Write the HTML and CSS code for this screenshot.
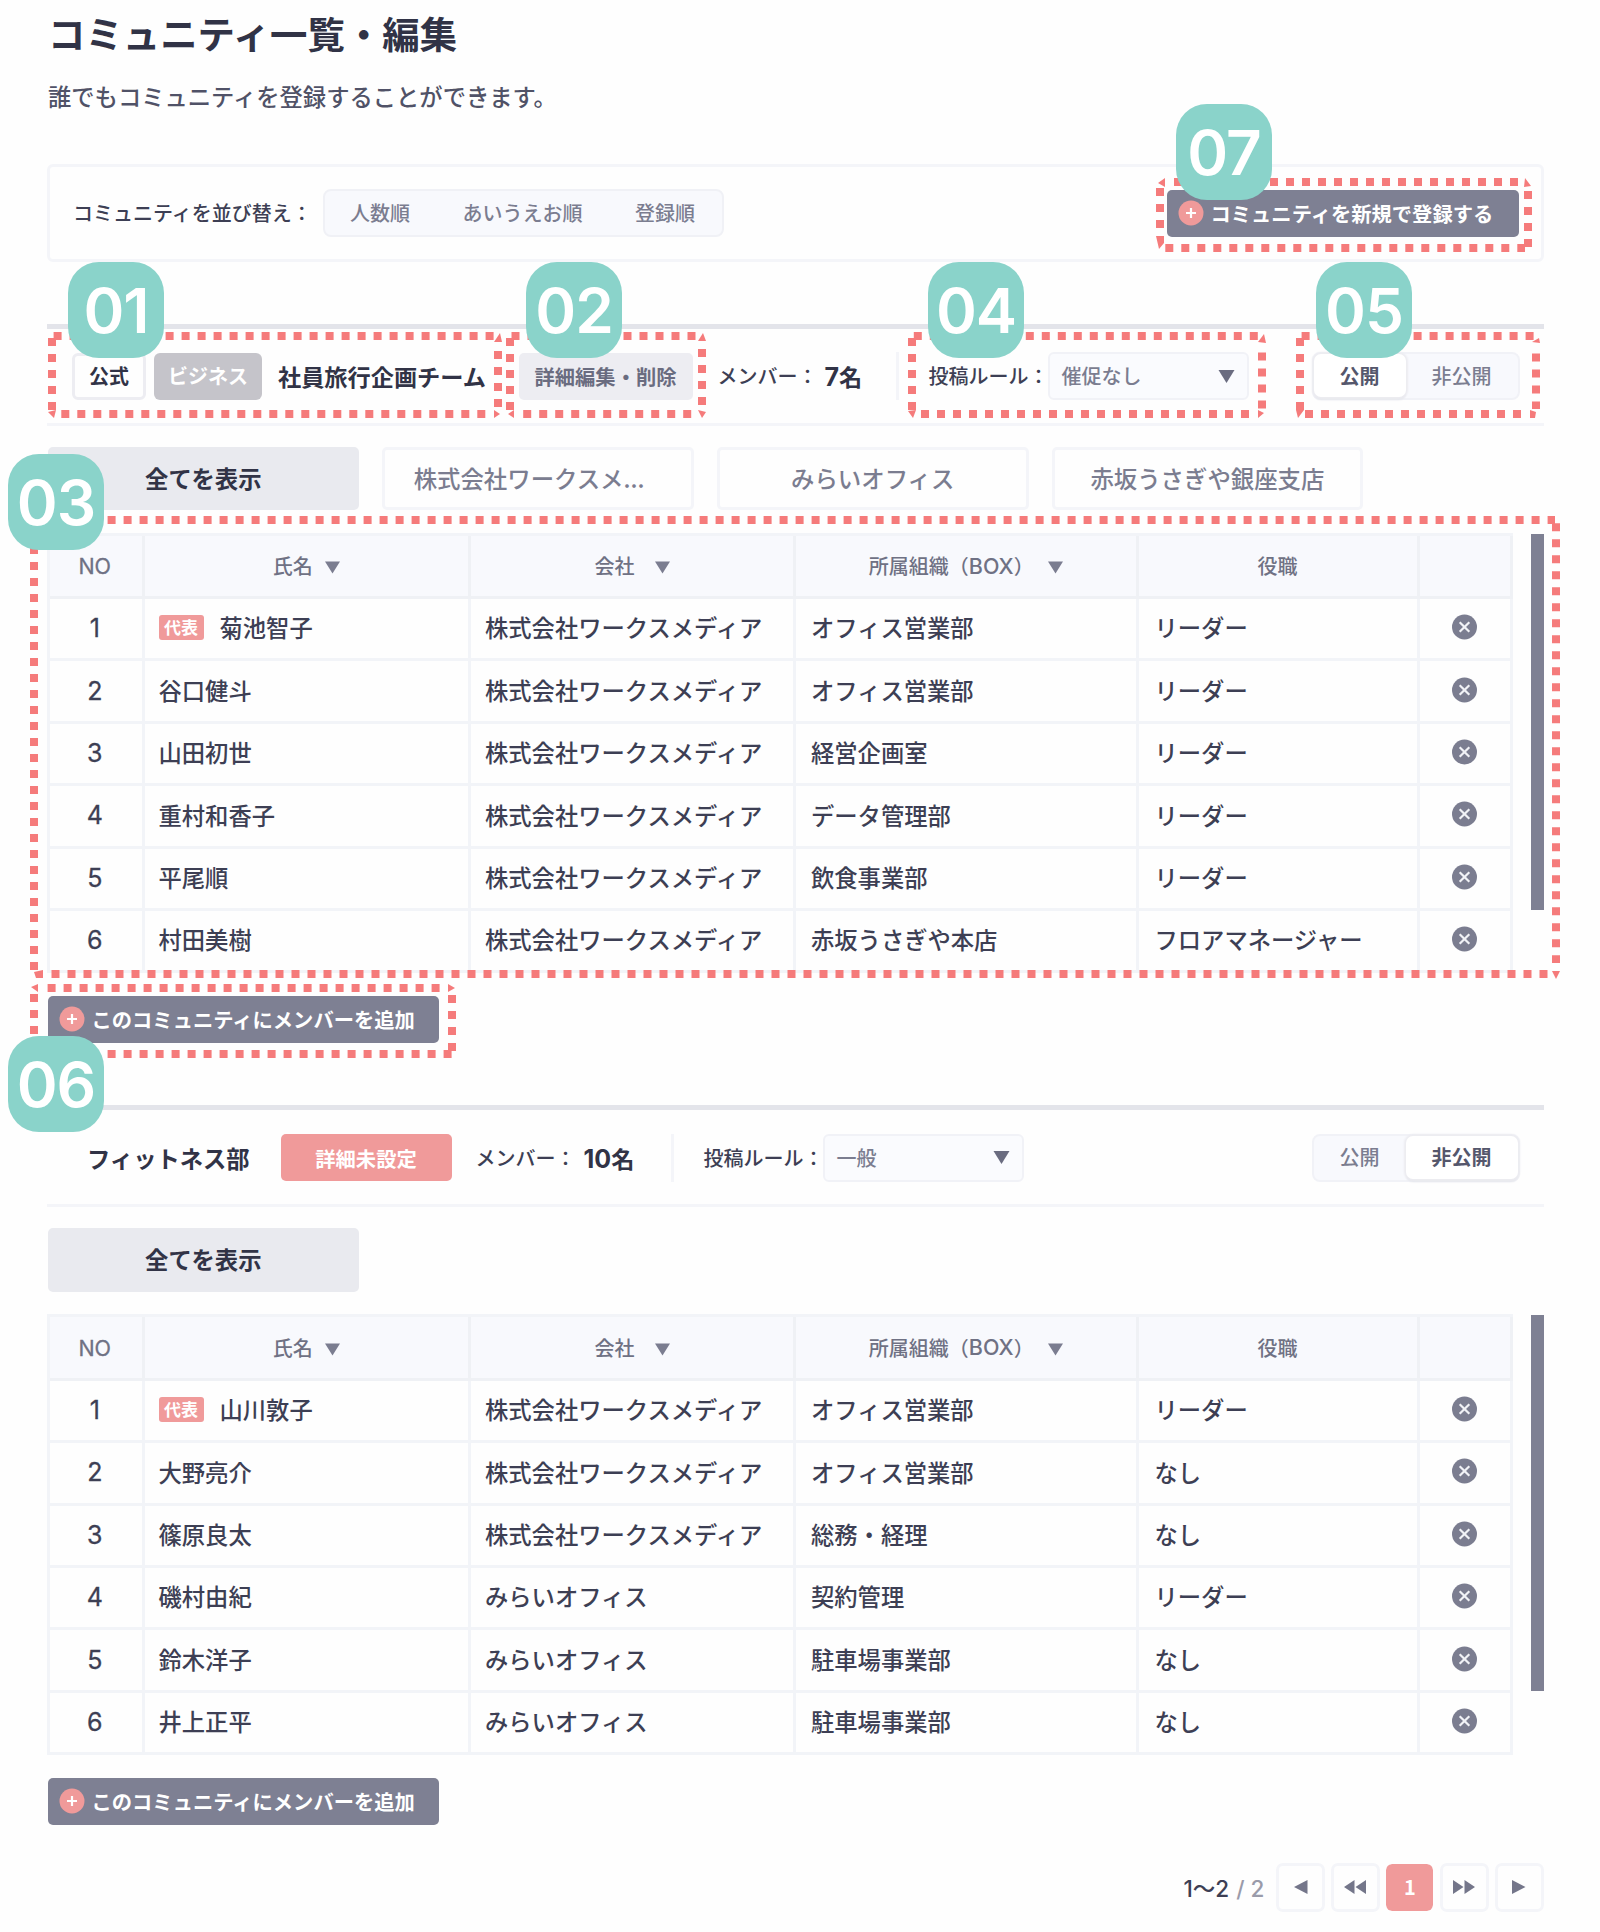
FILE: index.html
```html
<!DOCTYPE html>
<html lang="ja">
<head>
<meta charset="utf-8">
<title>コミュニティ一覧・編集</title>
<link rel="stylesheet" href="styles.css">
</head>
<body>
<svg class="defs" width="0" height="0" aria-hidden="true">
  <symbol id="down" viewBox="0 0 16 13"><path d="M0 0H16L8 13Z"/></symbol>
  <symbol id="plus" viewBox="0 0 26 26"><circle cx="13" cy="13" r="12.5" fill="#f09a9a"/><path d="M13 8V18M8 13H18" stroke="#fff" stroke-width="2.2"/></symbol>
  <symbol id="remove" viewBox="0 0 26 26"><circle cx="13" cy="13" r="13" fill="#7b7d90"/><path d="M8 8L18 18M18 8L8 18" stroke="#f1f2f6" stroke-width="2.3"/></symbol>
</svg>
<main class="page">
  <h1 class="title">コミュニティ一覧・編集</h1>
  <p class="lead">誰でもコミュニティを登録することができます。</p>

  <div class="filter">
    <span class="filter-label">コミュニティを並び替え：</span>
    <div class="sort"><span>人数順</span><span>あいうえお順</span><span>登録順</span></div>
    <button class="dark-btn create"><svg class="plus"><use href="#plus"/></svg>コミュニティを新規で登録する</button>
  </div>

  <section class="community">
    <header class="head">
      <span class="tag official">公式</span>
      <span class="tag business">ビジネス</span>
      <h2 class="name">社員旅行企画チーム</h2>
      <button class="edit">詳細編集・削除</button>
      <span class="members">メンバー：</span><b class="count"><span class="num">7</span>名</b>
      <span class="rule">投稿ルール：</span>
      <div class="select">催促なし<svg class="tri"><use href="#down"/></svg></div>
      <div class="toggle"><span class="opt open on">公開</span><span class="opt closed">非公開</span></div>
    </header>
    <nav class="tabs">
      <span class="tab current">全てを表示</span><span class="tab clipped">株式会社ワークスメ...</span><span class="tab">みらいオフィス</span><span class="tab">赤坂うさぎや銀座支店</span>
    </nav>
    <div class="list">
      <div class="table">
        <div class="row th"><span>NO</span><span>氏名<svg class="sorter near"><use href="#down"/></svg></span><span>会社<svg class="sorter"><use href="#down"/></svg></span><span>所属組織（<em class="latin">BOX</em>）<svg class="sorter box"><use href="#down"/></svg></span><span>役職</span><span></span></div>
        <div class="row"><span>1</span><span><i class="rep">代表</i>菊池智子</span><span>株式会社ワークスメディア</span><span>オフィス営業部</span><span>リーダー</span><span><svg class="x"><use href="#remove"/></svg></span></div>
        <div class="row"><span>2</span><span>谷口健斗</span><span>株式会社ワークスメディア</span><span>オフィス営業部</span><span>リーダー</span><span><svg class="x"><use href="#remove"/></svg></span></div>
        <div class="row"><span>3</span><span>山田初世</span><span>株式会社ワークスメディア</span><span>経営企画室</span><span>リーダー</span><span><svg class="x"><use href="#remove"/></svg></span></div>
        <div class="row"><span>4</span><span>重村和香子</span><span>株式会社ワークスメディア</span><span>データ管理部</span><span>リーダー</span><span><svg class="x"><use href="#remove"/></svg></span></div>
        <div class="row"><span>5</span><span>平尾順</span><span>株式会社ワークスメディア</span><span>飲食事業部</span><span>リーダー</span><span><svg class="x"><use href="#remove"/></svg></span></div>
        <div class="row"><span>6</span><span>村田美樹</span><span>株式会社ワークスメディア</span><span>赤坂うさぎや本店</span><span>フロアマネージャー</span><span><svg class="x"><use href="#remove"/></svg></span></div>
      </div>
      <div class="scrollbar"></div>
    </div>
    <button class="dark-btn add"><svg class="plus"><use href="#plus"/></svg>このコミュニティにメンバーを追加</button>
  </section>

  <section class="community">
    <header class="head plain">
      <h2 class="name">フィットネス部</h2>
      <button class="edit unset">詳細未設定</button>
      <span class="members">メンバー：</span><b class="count"><span class="num">10</span>名</b>
      <span class="rule">投稿ルール：</span>
      <div class="select">一般<svg class="tri"><use href="#down"/></svg></div>
      <div class="toggle"><span class="opt open">公開</span><span class="opt closed on">非公開</span></div>
    </header>
    <nav class="tabs"><span class="tab current">全てを表示</span></nav>
    <div class="list">
      <div class="table">
        <div class="row th"><span>NO</span><span>氏名<svg class="sorter near"><use href="#down"/></svg></span><span>会社<svg class="sorter"><use href="#down"/></svg></span><span>所属組織（<em class="latin">BOX</em>）<svg class="sorter box"><use href="#down"/></svg></span><span>役職</span><span></span></div>
        <div class="row"><span>1</span><span><i class="rep">代表</i>山川敦子</span><span>株式会社ワークスメディア</span><span>オフィス営業部</span><span>リーダー</span><span><svg class="x"><use href="#remove"/></svg></span></div>
        <div class="row"><span>2</span><span>大野亮介</span><span>株式会社ワークスメディア</span><span>オフィス営業部</span><span>なし</span><span><svg class="x"><use href="#remove"/></svg></span></div>
        <div class="row"><span>3</span><span>篠原良太</span><span>株式会社ワークスメディア</span><span>総務・経理</span><span>なし</span><span><svg class="x"><use href="#remove"/></svg></span></div>
        <div class="row"><span>4</span><span>磯村由紀</span><span>みらいオフィス</span><span>契約管理</span><span>リーダー</span><span><svg class="x"><use href="#remove"/></svg></span></div>
        <div class="row"><span>5</span><span>鈴木洋子</span><span>みらいオフィス</span><span>駐車場事業部</span><span>なし</span><span><svg class="x"><use href="#remove"/></svg></span></div>
        <div class="row"><span>6</span><span>井上正平</span><span>みらいオフィス</span><span>駐車場事業部</span><span>なし</span><span><svg class="x"><use href="#remove"/></svg></span></div>
      </div>
      <div class="scrollbar"></div>
    </div>
    <button class="dark-btn add"><svg class="plus"><use href="#plus"/></svg>このコミュニティにメンバーを追加</button>
  </section>

  <nav class="pager">
    <span class="range">1〜2 <span class="total">/ 2</span></span>
    <span class="pg"><svg width="24" height="16"><path d="M18.500 1V15L5 8Z"/></svg></span>
    <span class="pg"><svg width="24" height="16"><path d="M11.500 1V15L1 8ZM23 1V15L12.500 8Z"/></svg></span>
    <span class="pg now">1</span>
    <span class="pg"><svg width="24" height="16"><path d="M1 1V15L11.500 8ZM12.500 1V15L23 8Z"/></svg></span>
    <span class="pg"><svg width="24" height="16"><path d="M5 1V15L18.500 8Z"/></svg></span>
  </nav>

  <svg class="frames" viewBox="0 0 1600 1932" aria-hidden="true">
    <g class="dash">
      <path d="M53.600 336H494M61.300 414H486M52 338V410M498 351V407"/>
      <path d="M511.500 336H696M523.200 414H691.500M510 338V410M702 349V405"/>
      <path d="M43.600 520H1555M51.500 974H1547.500M34 546V971M1556 523.300V963"/>
      <path d="M913.800 336H1258M921 414H1249M912 338V410M1262 352.500V408.500"/>
      <path d="M1301.600 336H1533.600M1305 414H1521.500M1300 338V410M1536 353.500V409"/>
      <path d="M47.600 988H440M107.600 1054H451.600M34 994V1040M452 995V1051"/>
      <path d="M1174 182H1518M1165.300 248H1525M1160 188V228M1528 191V247"/>
    </g>
    <g class="wedge">
      <path d="M494 342H502L500 333ZM48 412L56 410L54 418ZM494 410V418L500 414Z"/>
      <path d="M698 341H706L703 333ZM508 414L514 410V418ZM698 410L706 412L702 418Z"/>
      <path d="M36 978L34 972L43 970V978ZM1552 971H1560L1556 979Z"/>
      <path d="M1258 342L1266 343L1264 334ZM908 411L916 410L913 418ZM1258 410V418L1264 413Z"/>
      <path d="M1532 342L1540 343L1539 338ZM1296 410H1304L1298 418ZM1530 410L1536 412L1535 418H1530Z"/>
      <path d="M448 984V992L455 988ZM38 984V992L31 987Z"/>
      <path d="M1158 183L1165 178V187ZM1525 178L1531 186L1524 187ZM1156 236H1164V243L1159 249Z"/>
    </g>
  </svg>
  <div class="badge b1">01</div>
  <div class="badge b2">02</div>
  <div class="badge b3">03</div>
  <div class="badge b4">04</div>
  <div class="badge b5">05</div>
  <div class="badge b6">06</div>
  <div class="badge b7">07</div>
</main>
</body>
</html>
```

FILE: styles.css
```css
* { box-sizing: border-box; }
body {
  margin: 0;
  background: #fefefe;
  color: #3d3f54;
  font: 500 20px/1.4 "Noto Sans CJK JP", sans-serif;
}
h1, h2, p { margin: 0; }
button { border: 0; font: inherit; padding: 0; white-space: nowrap; }
.defs { position: absolute; }
.page {
  position: relative;
  width: 1600px;
  height: 1932px;
  padding: 5px 56.500px 0 47px;
  overflow: hidden;
}
.title { padding-left: 1px; font-size: 37.400px; font-weight: 700; line-height: 56px; color: #313346; }
.lead { margin-top: 15px; padding-left: 1px; font-size: 23.300px; line-height: 40px; color: #505267; }

.filter {
  display: flex;
  align-items: center;
  height: 98px;
  margin-top: 48px;
  padding: 0 22px 0 23px;
  border: 3px solid #f4f5f9;
  border-radius: 6px;
}
.filter-label { width: 250px; white-space: nowrap; }
.sort {
  display: flex;
  align-items: center;
  gap: 52.500px;
  width: 401px;
  height: 48px;
  padding-left: 25px;
  border: 2px solid #f0f1f6;
  border-radius: 8px;
  background: #f8f9fd;
  color: #7b7d90;
}
.dark-btn {
  display: flex;
  align-items: center;
  height: 47px;
  padding-left: 11px;
  border-radius: 5px;
  background: #7e8093;
  color: #fff;
  font-size: 20.300px;
  font-weight: 700;
}
.plus { width: 26px; height: 26px; margin-right: 7px; }
.create { width: 352px; margin-left: auto; }
.add { width: 391.500px; margin: 22.500px 0 0 .5px; }

.community { margin-top: 61.500px; border-top: 5px solid #e3e4ea; }
.community + .community { margin-top: 62.500px; }
.head {
  display: flex;
  align-items: center;
  height: 97px;
  padding: 1px 24px 0 25px;
  border-bottom: 3px solid #f4f5f9;
  white-space: nowrap;
}
.tag {
  display: flex;
  align-items: center;
  justify-content: center;
  height: 47px;
  border-radius: 6px;
  font-weight: 700;
}
.official { width: 74px; border: 3px solid #ededf2; color: #313346; }
.business { width: 108px; margin-left: 8px; background: #c5c4ca; color: #fff; }
.name { width: 256.500px; padding-left: 16px; font-size: 23.200px; font-weight: 700; color: #313346; }
.plain .name { width: 208.500px; font-size: 23.300px; padding-left: 15px; }
.edit {
  width: 174px;
  height: 47px;
  border-radius: 5px;
  background: #ededf2;
  color: #6a6c80;
  font-size: 20.300px;
  font-weight: 700;
}
.unset { width: 171px; background: #f09a9a; color: #fff; }
.members { width: 131px; padding-left: 25px; }
.count { width: 72px; padding-left: 1px; font-size: 23.200px; color: #313346; }
.num { font-family: Inter, sans-serif; font-size: 25px; line-height: 1; }
.plain .members { padding-left: 24px; }
.plain .count { width: 88px; }
.rule {
  display: flex;
  align-items: center;
  width: 152px;
  height: 48px;
  padding-left: 30px;
  border-left: 3px solid #f4f5f9;
}
.select {
  display: flex;
  align-items: center;
  justify-content: space-between;
  width: 201px;
  height: 48px;
  padding: 0 12px;
  border: 2px solid #f1f2f7;
  border-radius: 6px;
  background: #fafbfe;
  color: #7b7d90;
}
.tri { width: 17px; height: 13px; fill: #6a6c80; }
.toggle {
  display: flex;
  width: 208px;
  height: 48px;
  margin-left: auto;
  border: 2px solid #f1f2f7;
  border-radius: 8px;
  background: #f8f9fd;
  color: #7b7d90;
}
.opt { display: flex; align-items: center; justify-content: center; height: 43px; border-radius: 7px; }
.open { width: 92px; }
.closed { width: 112px; }
.on { background: #fff; color: #55576c; font-weight: 700; box-shadow: 0 0 2px 2px #ececf1, 0 3px 2px #e4e5eb; }

.tabs { display: flex; gap: 23px; margin: 21px 0 0 .5px; }
.tab {
  width: 311.700px;
  height: 63.500px;
  border: 3px solid #f4f5f9;
  border-radius: 5px;
  text-align: center;
  font-size: 23.400px;
  line-height: 56px;
  color: #7b7d90;
}
.tab.clipped { text-align: left; padding-left: 28.500px; }
.tab.current { border-color: #e9eaef; background: #e9eaef; color: #313346; font-weight: 700; }

.list { display: flex; justify-content: space-between; align-items: flex-start; margin-top: 22.500px; }
.table { border: solid #f2f4f8; border-width: 3px 0 0 3px; }
.row {
  display: grid;
  grid-template-columns: 94.500px 326.500px 325px 342.500px 281px 93.500px;
  height: 62.400px;
  font-size: 23.300px;
}
.row > span {
  display: flex;
  align-items: center;
  padding: 0 0 2px 14px;
  border: solid #f2f4f8;
  border-width: 0 3px 3px 0;
  white-space: nowrap;
}
.row > span:first-child, .row > span:last-child, .th > span { justify-content: center; padding-left: 0; }
.row > span:first-child { padding: 0 2px 0 0; font-family: Inter, sans-serif; font-size: 25px; font-weight: 400; -webkit-text-stroke: .3px; }
.row > span:last-child { padding-bottom: 3px; }
.row > span:nth-child(4) { padding-left: 15px; }
.row > span:nth-child(5) { padding-left: 16px; }
.row.th { height: 63.500px; background: #f8f9fd; color: #6f7184; font-size: 20px; }
.row.th > span { justify-content: center; padding: 1px 0 0; border-color: #eff1f5; }
.row.th > span:first-child { padding-right: 2px; font-size: 21.500px; }
.latin { font-family: Inter, sans-serif; font-style: normal; font-size: 21.500px; line-height: 1; }
.sorter { width: 15px; height: 13px; margin: 2px 0 0 20px; fill: #7b7d90; }
.sorter.near { margin-left: 12px; }
.sorter.box { margin-left: 14px; }
.rep {
  width: 45px;
  height: 25px;
  margin-right: 16px;
  border-radius: 3px;
  background: #f09a9a;
  color: #fff;
  font-style: normal;
  font-size: 17px;
  font-weight: 700;
  line-height: 24px;
  text-align: center;
}
.x { width: 25px; height: 26px; }
.scrollbar { width: 12.500px; height: 376px; margin-top: 1px; background: #7e8093; }

.pager { display: flex; justify-content: flex-end; gap: 5.600px; margin-top: 38px; }
.range { width: 87px; line-height: 51px; font: 500 22.500px/51px Inter, "Noto Sans CJK JP", sans-serif; white-space: nowrap; }
.total { color: #9a9baa; margin-left: 1px; }
.pg {
  display: flex;
  align-items: center;
  justify-content: center;
  width: 49px;
  height: 49px;
  border: 3px solid #f4f5f9;
  border-radius: 7px;
  fill: #74768a;
}
.now {
  border: 1px solid #fefefe;
  background: #f09a9a;
  background-clip: padding-box;
  color: #fff;
  font-weight: 700;
}

.frames { position: absolute; left: 0; top: 0; width: 1600px; height: 1932px; pointer-events: none; }
.dash { fill: none; stroke: #f57b7b; stroke-width: 8; stroke-dasharray: 8 8; }
.wedge { fill: #f57b7b; }
.badge {
  position: absolute;
  width: 96px;
  height: 96px;
  border-radius: 31px;
  background: #8ad3ca;
  color: #fff;
  font: 600 62px/97px Inter, sans-serif;
  letter-spacing: -1px;
  text-align: center;
}
.b1 { left: 68px; top: 262px; }
.b2 { left: 526px; top: 262px; }
.b3 { left: 8px; top: 454px; }
.b4 { left: 928px; top: 262px; }
.b5 { left: 1316px; top: 262px; }
.b6 { left: 8px; top: 1036px; }
.b7 { left: 1176px; top: 104px; }
```
